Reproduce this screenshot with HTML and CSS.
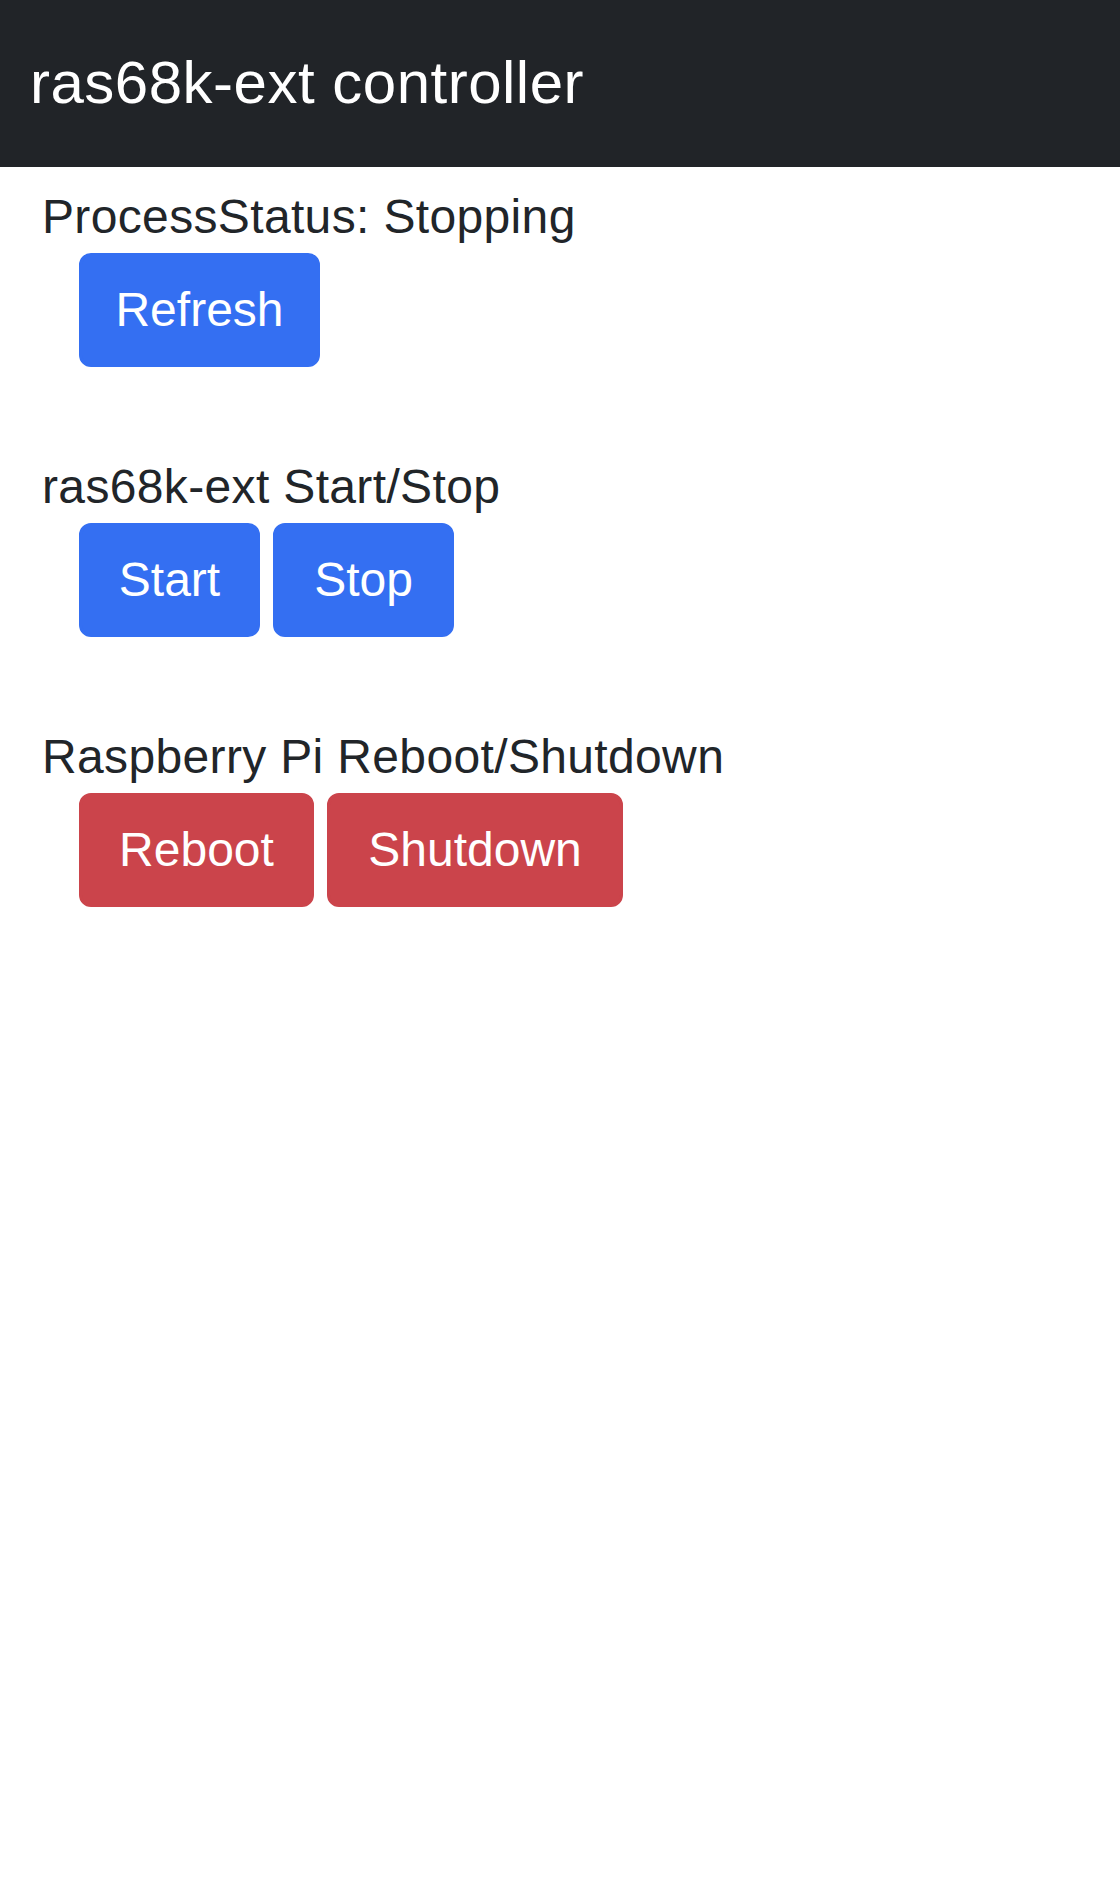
FILE: index.html
```html
<!DOCTYPE html>
<html lang="en">
<head>
<meta charset="utf-8">
<title>ras68k-ext controller</title>
<link rel="stylesheet" href="styles.css">
</head>
<body>
<header class="navbar">
  <span class="brand">ras68k-ext controller</span>
</header>
<main class="content">
  <section class="group">
    <div class="group-title">ProcessStatus: Stopping</div>
    <div class="actions">
      <button class="btn btn-primary w-refresh">Refresh</button>
    </div>
  </section>
  <section class="group">
    <div class="group-title">ras68k-ext Start/Stop</div>
    <div class="actions">
      <button class="btn btn-primary w-start">Start</button>
      <button class="btn btn-primary w-stop">Stop</button>
    </div>
  </section>
  <section class="group">
    <div class="group-title">Raspberry Pi Reboot/Shutdown</div>
    <div class="actions">
      <button class="btn btn-danger w-reboot">Reboot</button>
      <button class="btn btn-danger w-shutdown">Shutdown</button>
    </div>
  </section>
</main>
</body>
</html>
```
FILE: styles.css
```css
html, body {
  margin: 0;
  padding: 0;
  background: #ffffff;
}
body {
  font-family: "Liberation Sans", Arial, Helvetica, sans-serif;
  color: #212529;
}
.navbar {
  background: #212428;
  padding: 38px 0 39px 30px;
  height: 90px;
}
.brand {
  display: block;
  color: #ffffff;
  font-size: 60px;
  line-height: 90px;
  letter-spacing: 0.5px;
  white-space: nowrap;
}
.content {
  padding: 14px 0 0 42px;
}
.group {
  margin-bottom: 84px;
}
.group-title {
  font-size: 48px;
  line-height: 72px;
  letter-spacing: 0.35px;
  white-space: nowrap;
}
.actions {
  display: flex;
  gap: 13px;
  margin-left: 37px;
}
.btn {
  box-sizing: border-box;
  height: 114px;
  padding: 0;
  border: 3px solid transparent;
  border-radius: 12px;
  font-family: inherit;
  font-size: 48px;
  line-height: 72px;
  color: #ffffff;
  text-align: center;
  cursor: pointer;
}
.btn-primary {
  background: #346ff2;
  border-color: #346ff2;
}
.btn-danger {
  background: #cb444b;
  border-color: #cb444b;
}
.w-refresh { width: 241px; }
.w-start { width: 181px; }
.w-stop { width: 181px; }
.w-reboot { width: 235px; }
.w-shutdown { width: 296px; }
```
